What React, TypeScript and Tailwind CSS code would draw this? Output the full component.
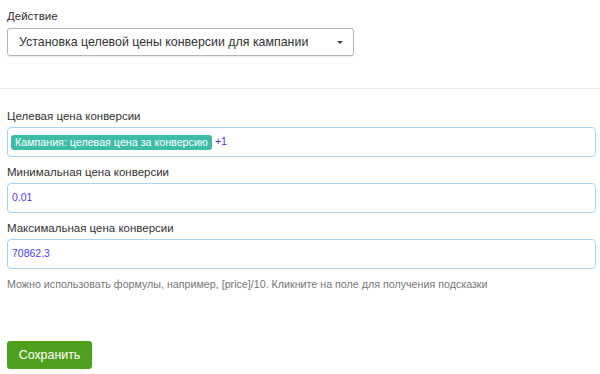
import React from 'react';

function Field({ label, children }: { label: string; children: React.ReactNode }) {
  return (
    <div className="flex flex-col">
      <div className="text-[11.5px] leading-[16px] text-[#333]">{label}</div>
      <div className="mt-[3px] h-[30px] w-full rounded-[4px] border border-[#a9d3f5] flex items-center px-[3px]">
        {children}
      </div>
    </div>
  );
}

export default function App() {
  return (
    <div className="w-[600px] h-[374px] bg-white overflow-hidden" style={{ fontFamily: "'Liberation Sans', Arial, sans-serif" }}>
      {/* действие */}
      <div className="px-[7px] pt-[8px]">
        <div className="text-[11.5px] leading-[16px] text-[#333]">Действие</div>
        <div className="mt-[4px] w-[347px] h-[28px] rounded-[3px] border border-[#b5b5b5] shadow-[0_1px_1px_rgba(0,0,0,0.08)] flex items-center justify-between pl-[11px] pr-[10px]">
          <span className="text-[12.4px] text-[#333]">Установка целевой цены конверсии для кампании</span>
          <span className="w-0 h-0 border-l-[3px] border-r-[3px] border-t-[3px] border-l-transparent border-r-transparent border-t-[#444]" />
        </div>
      </div>

      <div className="mt-[32px] border-t border-[#ececec]" />

      {/* поля */}
      <div className="px-[4px] pt-[19px] flex flex-col gap-[7px]">
        <div className="pl-[3px]">
          <Field label="Целевая цена конверсии">
            <span className="h-[15px] px-[4px] rounded-[3px] bg-[#3dbda6] text-white text-[10.7px] leading-[15px] flex items-center">
              Кампания: целевая цена за конверсию
            </span>
            <span className="ml-[3px] text-[10.5px] text-[#3434f0]">+1</span>
          </Field>
        </div>
        <div className="pl-[3px]">
          <Field label="Минимальная цена конверсии">
            <span className="text-[10.5px] text-[#4a3ff0] pl-[1px]">0.01</span>
          </Field>
        </div>
        <div className="pl-[3px]">
          <Field label="Максимальная цена конверсии">
            <span className="text-[10.5px] text-[#4a3ff0] pl-[1px]">70862.3</span>
          </Field>
        </div>
        <div className="pl-[3px] text-[10.7px] leading-[16px] text-[#777]">
          Можно использовать формулы, например, [price]/10. Кликните на поле для получения подсказки
        </div>
      </div>

      <div className="px-[7px] mt-[49px]">
        <button className="w-[85px] h-[28px] rounded-[3px] bg-[#4fa11d] text-white text-[12.4px]">
          Сохранить
        </button>
      </div>
    </div>
  );
}
